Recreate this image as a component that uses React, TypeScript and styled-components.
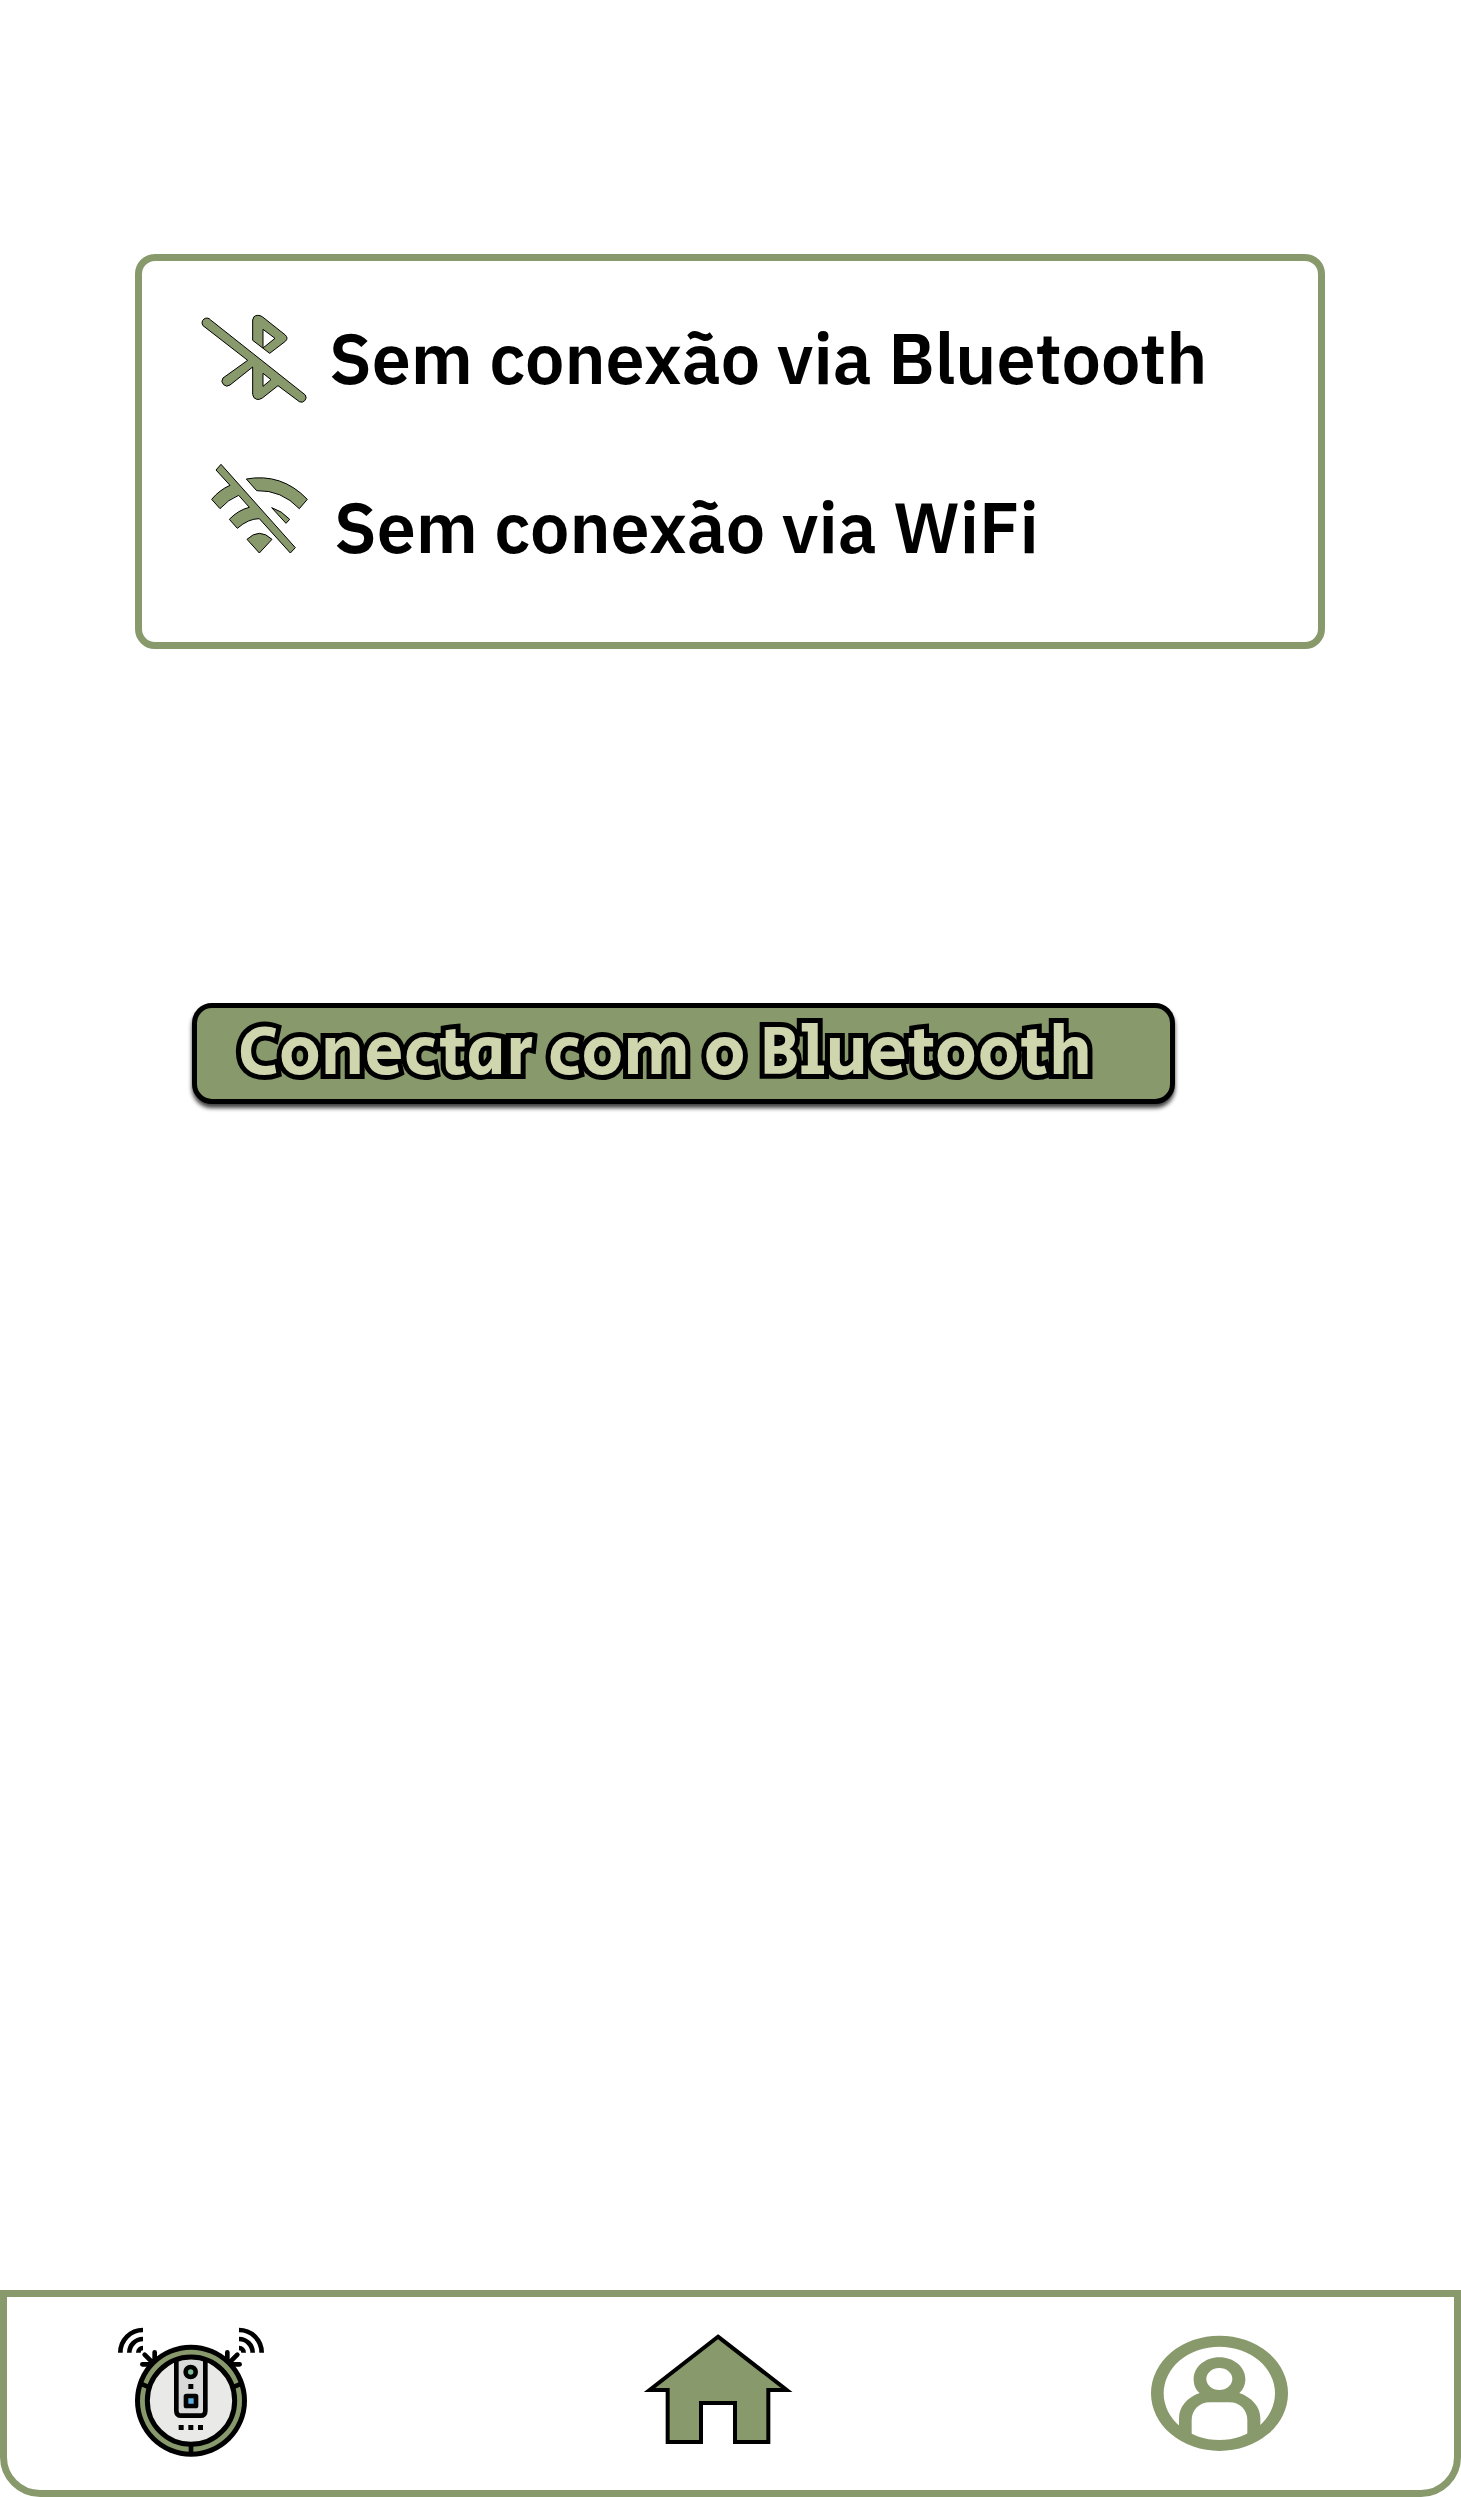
import React from "react";
import styled, { createGlobalStyle } from "styled-components";

const green = "#88996c";

const GlobalStyle = createGlobalStyle`
  *, *::before, *::after { box-sizing: border-box; }
  body { margin: 0; background: #fff; color: #000; font-family: "IBM Plex Sans", Roboto, sans-serif; }
`;

const Page = styled.div`
  min-height: 100vh;
  display: flex;
  flex-direction: column;
`;

const Content = styled.main`
  flex: 1;
  display: flex;
  flex-direction: column;
  padding: 254px 136px 64px 135px;
`;

const StatusCard = styled.ul`
  list-style: none;
  margin: 0;
  padding: 51px 56px 69px;
  display: flex;
  flex-direction: column;
  gap: 48px;
  border: 7px solid ${green};
  border-radius: 20px;
`;

const StatusRow = styled.li<{ $align: "flex-start" | "flex-end" }>`
  display: flex;
  align-items: ${(p) => p.$align};
  gap: 16px;
`;

const StatusText = styled.span`
  font-size: 70px;
  font-weight: 600;
  line-height: 92px;
`;

const StatusIcon = styled.svg`
  flex: none;
  fill: ${green};
  stroke: #000;
  stroke-width: 3;
`;

const ConnectButton = styled.button`
  margin: 354px 150px 0 57px;
  padding: 0 41px;
  border: 5px solid #000;
  border-radius: 20px;
  background: ${green};
  box-shadow: 0 4px 4px rgba(0, 0, 0, 0.75);
  color: #cfd6ae;
  font-family: "Secular One", "Noto Sans", "Open Sans", sans-serif;
  font-size: 70px;
  font-weight: 400;
  line-height: 91px;
  text-align: left;
  -webkit-text-stroke: 10px #000;
  paint-order: stroke fill;
  cursor: pointer;
`;

const NavBar = styled.nav`
  display: flex;
  justify-content: space-between;
  padding: 23px 143px 30px 94px;
  border: 7px solid ${green};
  border-radius: 0 0 40px 40px;
`;

const NavLink = styled.a`
  display: block;
  color: ${green};
`;

const NavIcon = styled.svg`
  display: block;
  width: 180px;
  height: 140px;
`;

function BluetoothOff() {
  return (
    <StatusIcon width="115" height="100" viewBox="54 66 345 300" aria-hidden="true">
      <path
        fillRule="evenodd"
        d="M92 90 L376 315 A14 14 0 0 1 358 335 L294 287 L247 324 Q238 330 230 328 Q219 325 218 313 V231 L150 285 A15 15 0 0 1 129 264 L203 211 L69 107 A14 14 0 0 1 92 90 Z M249 250 L273 269 L249 289 Z"
      />
      <path
        fillRule="evenodd"
        d="M218 151 V90 Q219 77 232 76 Q240 75 248 81 L316 135 Q326 145 316 154 L269 190 Z M249 118 L285 145 L249 174 Z"
      />
    </StatusIcon>
  );
}

function WifiOff() {
  return (
    <StatusIcon width="120" height="113" viewBox="24 60 360 339" aria-hidden="true">
      <path d="M93 73 L316 323 L301 339 L208 236 Q175 236 142 265 L118 238 Q145 210 178 202 L146 166 Q115 178 90 206 L65 178 Q88 150 120 136 L78 90 Z" />
      <path d="M169 117 Q275 98 352 178 L328 206 Q275 150 200 152 Z" />
      <path d="M245 203 Q275 212 299 238 L288 250 Z" />
      <path d="M171 298 Q208 262 246 298 L208 339 Z" />
    </StatusIcon>
  );
}

function Robot() {
  return (
    <NavIcon viewBox="3 30 540 420" aria-hidden="true">
      <g fill="none" stroke="#000" strokeWidth="14">
        <path d="M61 128 A68 68 0 0 1 129 60 M88 128 A41 41 0 0 1 129 87 M115 128 A14 14 0 0 1 129 114" />
        <path d="M485 128 A68 68 0 0 0 417 60 M458 128 A41 41 0 0 0 417 87 M431 128 A14 14 0 0 0 417 114" />
      </g>
      <path
        d="M127 163 H160 M134 134 L160 160 M164 127 V157 M419 163 H386 M412 134 L386 160 M382 127 V157"
        stroke="#000"
        strokeWidth="14"
        strokeLinecap="round"
      />
      <circle cx="273" cy="272" r="168" fill="#000" />
      <circle cx="273" cy="272" r="153" fill={green} />
      <path d="M273 400 V432 M122 221 L148 232 M424 221 L398 232" stroke="#000" strokeWidth="14" />
      <circle cx="273" cy="272" r="131" fill="#e9e9e8" />
      <path
        d="M229 145 V302 Q229 317 244 317 H301 Q316 317 316 302 V145"
        fill="#d9d9d9"
        stroke="#000"
        strokeWidth="14"
      />
      <circle cx="273" cy="272" r="131" fill="none" stroke="#000" strokeWidth="15" />
      <circle cx="272" cy="186" r="15" fill="#7dbb96" stroke="#000" strokeWidth="14" />
      <rect x="258" y="258" width="30" height="30" rx="1" fill="#5cade0" stroke="#000" strokeWidth="14" strokeLinejoin="round" />
      <path d="M265 222 h15 v15 h-15 z M236 345 h15 v15 h-15 z M265 345 h15 v15 h-15 z M294 345 h15 v15 h-15 z" />
    </NavIcon>
  );
}

function Home() {
  return (
    <NavIcon viewBox="-42 30 540 420" aria-hidden="true">
      <path
        d="M264 80 L470 240 H415 V396 H315 V279 H213 V396 H113 V240 H59 Z"
        fill="currentColor"
        stroke="#000"
        strokeWidth="12"
      />
    </NavIcon>
  );
}

function Profile() {
  return (
    <NavIcon viewBox="3 30 540 420" fill="currentColor" fillRule="evenodd" aria-hidden="true">
      <path d="M63 250 a205.500 173 0 1 0 411 0 a205.500 173 0 1 0 -411 0 Z M101 250 a167 140 0 1 1 334 0 a167 140 0 1 1 -334 0 Z" />
      <path d="M209 249 C195 238 191 222 191 207 C191 171 226 142 268 142 C311 142 346 171 346 207 C346 222 341 238 328 249 C365 262 391 290 391 325 V352 L352 385 V330 C352 300 330 277 298 277 H240 C208 277 185 300 185 330 V385 L147 352 V325 C147 290 172 262 209 249 Z M229 207 a39 33 0 1 0 78 0 a39 33 0 1 0 -78 0 Z" />
    </NavIcon>
  );
}

export default function App() {
  return (
    <Page>
      <GlobalStyle />
      <Content>
        <StatusCard>
          <StatusRow $align="flex-start">
            <BluetoothOff />
            <StatusText>Sem conexão via Bluetooth</StatusText>
          </StatusRow>
          <StatusRow $align="flex-end">
            <WifiOff />
            <StatusText>Sem conexão via WiFi</StatusText>
          </StatusRow>
        </StatusCard>
        <ConnectButton type="button">Conectar com o Bluetooth</ConnectButton>
      </Content>
      <NavBar>
        <NavLink href="#robo" aria-label="Robô"><Robot /></NavLink>
        <NavLink href="#inicio" aria-label="Início"><Home /></NavLink>
        <NavLink href="#perfil" aria-label="Perfil"><Profile /></NavLink>
      </NavBar>
    </Page>
  );
}
